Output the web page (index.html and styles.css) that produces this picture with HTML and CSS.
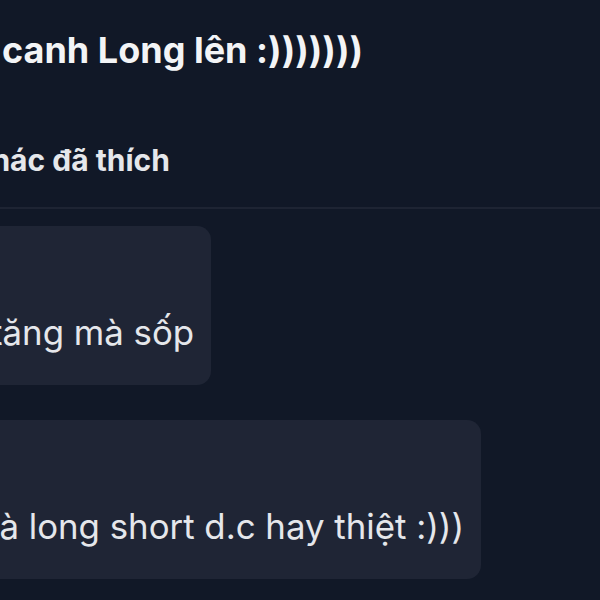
FILE: index.html
```html
<!DOCTYPE html>
<html lang="vi">
<head>
    <meta charset="UTF-8">
    <title>Bình luận</title>
    <link rel="stylesheet" href="styles.css">
</head>
<body>
    <div class="post">
        <h1 class="post-title">canh Long lên :)))))))</h1>
        <div class="likes">khác đã thích</div>
    </div>

    <div class="comments">
        <div class="comment">
            <div class="avatar"></div>
            <div class="bubble">
                <div class="text">tăng mà sốp</div>
            </div>
        </div>

        <div class="comment">
            <div class="avatar"></div>
            <div class="bubble">
                <div class="text">là long short d.c hay thiệt :)))</div>
            </div>
        </div>
    </div>
</body>
</html>
```

FILE: styles.css
```css
html, body {
    overflow: hidden;
}

body {
    margin: 0;
    padding: 0;
    background-color: #111827;
    color: #e5e7eb;
    font-family: Inter, "Liberation Sans", sans-serif;
}

.post {
    padding-top: 30px;
    padding-bottom: 31px;
    border-bottom: 2px solid #1e2433;
}

.post-title {
    margin: 0 0 0 2px;
    font-size: 36px;
    line-height: 40px;
    font-weight: 700;
    color: #f3f4f6;
    white-space: nowrap;
}

.likes {
    margin: 74px 0 0 -26px;
    font-size: 30px;
    line-height: 32px;
    font-weight: 700;
    color: #e5e7eb;
    white-space: nowrap;
}

.comments {
    display: flex;
    flex-direction: column;
    gap: 35px;
    margin-left: -83px;
    padding-top: 17px;
}

.comment {
    display: flex;
    align-items: flex-start;
    gap: 14px;
}

.avatar {
    width: 40px;
    height: 40px;
    border-radius: 50%;
    background-color: #374151;
    flex-shrink: 0;
}

.bubble {
    background-color: #1f2535;
    border-radius: 14px;
    padding: 86px 17px 33px 20px;
}

.text {
    font-size: 34.8px;
    line-height: 40px;
    white-space: nowrap;
}
```
